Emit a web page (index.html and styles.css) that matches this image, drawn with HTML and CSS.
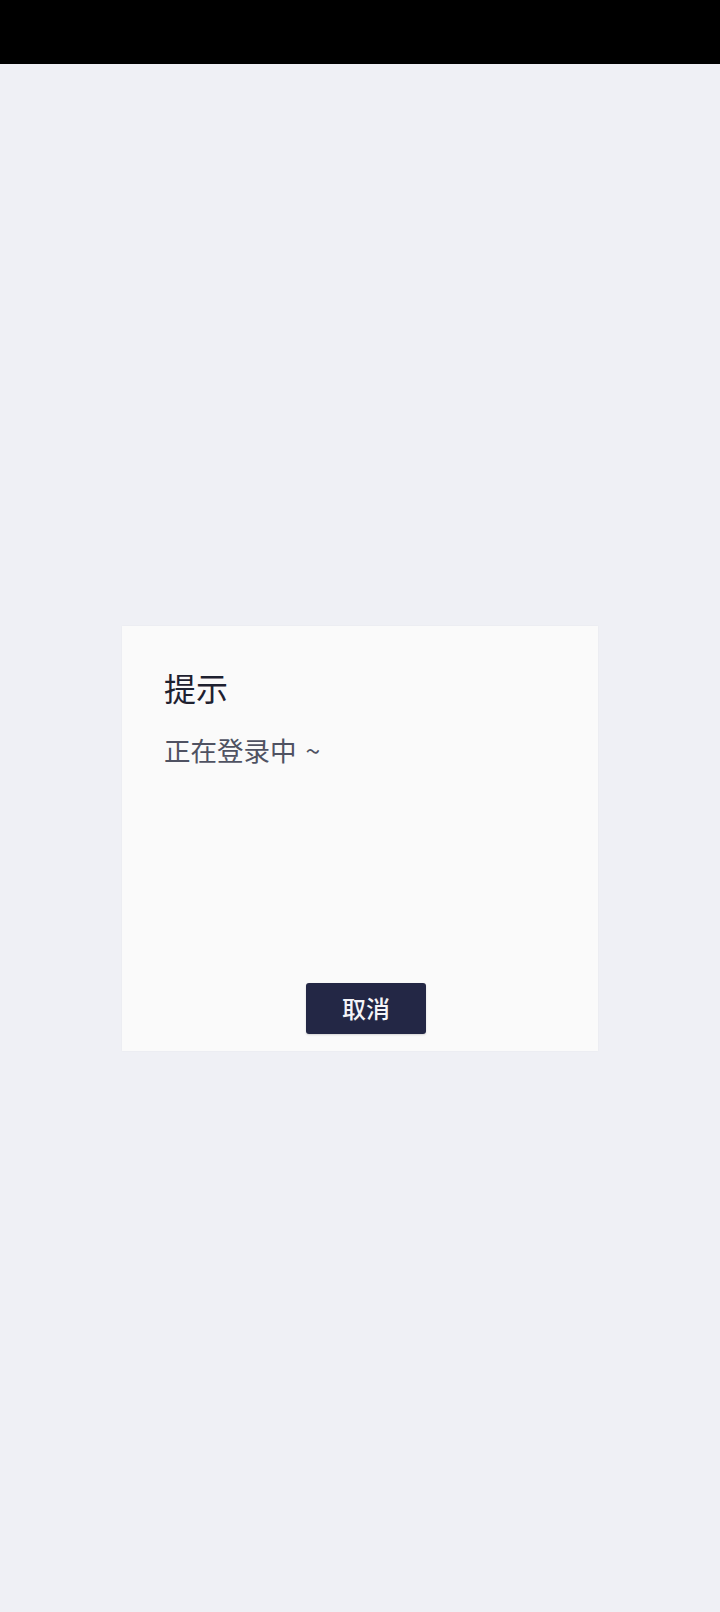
FILE: index.html
```html
<!DOCTYPE html>
<html lang="zh-CN">
<head>
<meta charset="utf-8">
<title>提示</title>
<link rel="stylesheet" href="styles.css">
</head>
<body>
<div class="statusbar"></div>
<main class="stage">
  <section class="dialog">
    <h1 class="dialog-title">提示</h1>
    <p class="dialog-message">正在登录中 <span class="tilde">~</span></p>
    <div class="dialog-actions">
      <button class="btn-cancel" type="button">取消</button>
    </div>
  </section>
</main>
</body>
</html>
```
FILE: styles.css
```css
html, body {
  margin: 0;
  padding: 0;
}
body {
  width: 720px;
  height: 1612px;
  background: #eff0f5;
  font-family: "Noto Sans CJK SC", "Noto Sans", sans-serif;
  overflow: hidden;
}
.statusbar {
  height: 64px;
  background: #000;
}
.stage {
  height: 1548px;
  display: flex;
  align-items: center;
  justify-content: center;
}
.dialog {
  box-sizing: border-box;
  width: 476px;
  height: 425px;
  background: #fafafa;
  padding: 45px 42px 17px 42px;
  display: flex;
  flex-direction: column;
  box-shadow: 0 0 2px rgba(0, 0, 0, 0.04);
}
.dialog-title {
  margin: 0;
  font-size: 32px;
  line-height: 32px;
  font-weight: 400;
  color: #1e2130;
}
.dialog-message {
  margin: 33px 0 0 0;
  font-size: 26.5px;
  line-height: 27px;
  color: #4f5262;
}
.tilde {
  margin-left: 3px;
}
.dialog-actions {
  margin-top: auto;
  padding-left: 12px;
  display: flex;
  justify-content: center;
}
.btn-cancel {
  width: 120px;
  height: 51px;
  border: none;
  border-radius: 3px;
  background: #232745;
  color: #f4f4f8;
  font-family: "Noto Sans CJK SC", "Noto Sans", sans-serif;
  font-size: 24px;
  font-weight: 500;
  line-height: 1;
  padding: 0;
  box-shadow: 0 1px 2px rgba(0, 0, 0, 0.15);
}
```
